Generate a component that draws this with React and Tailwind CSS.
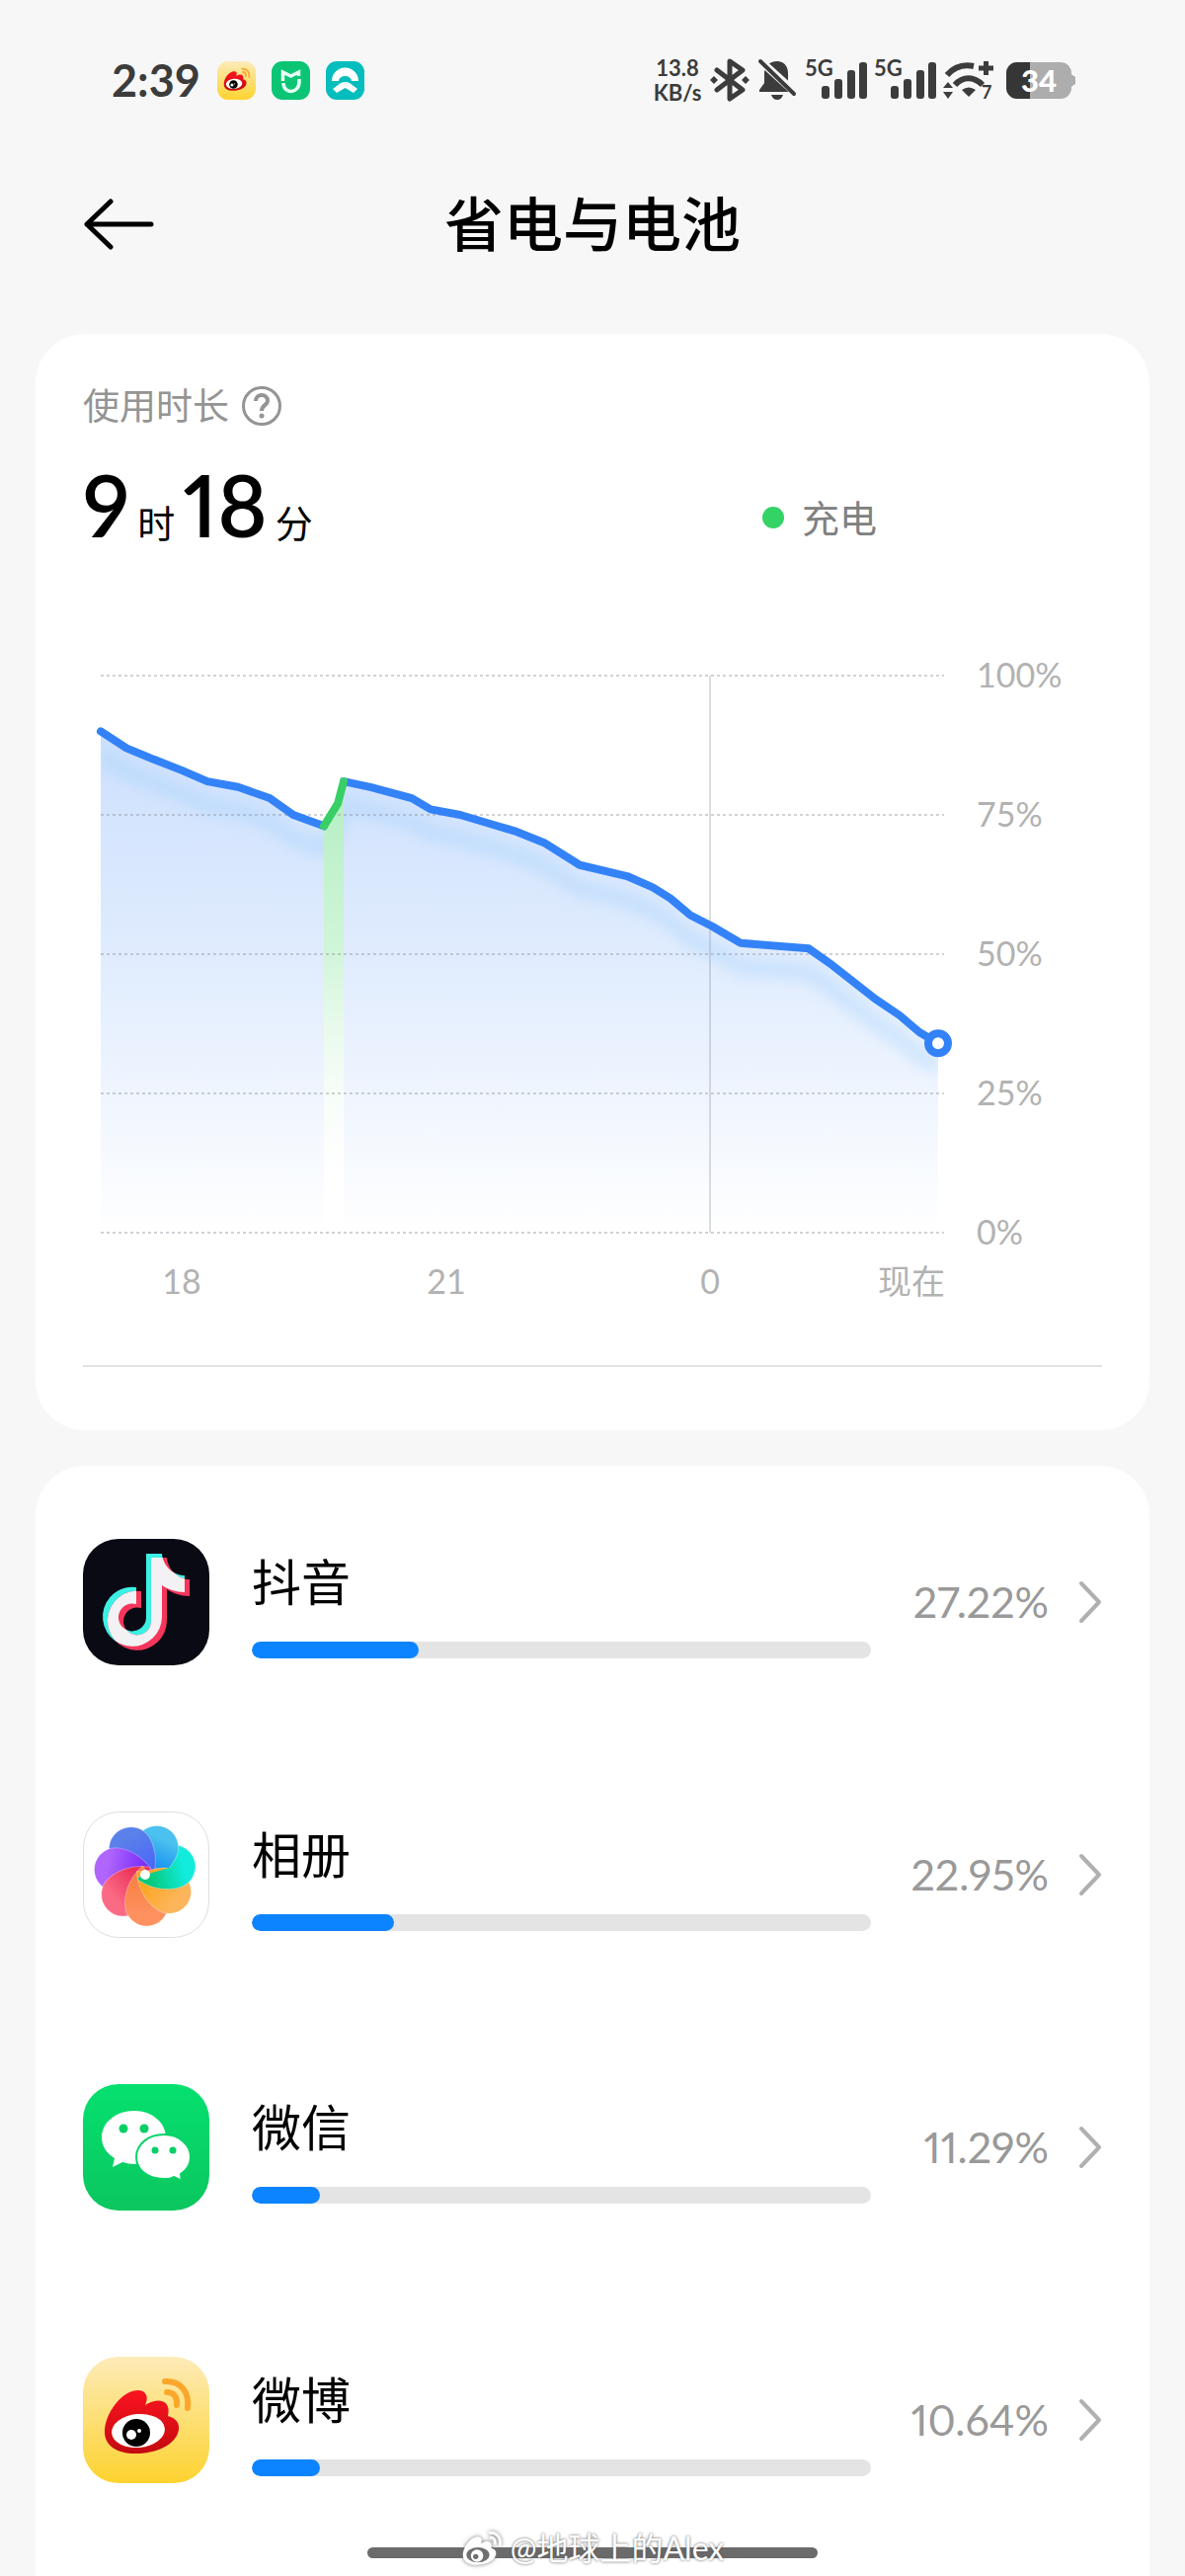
const levelBefore = [
  [18, 90], [44, 87], [71, 85], [100, 83], [126, 81], [157, 80], [189, 78], [213, 75], [244, 73],
];

const levelCharging = [[244, 73], [258, 77], [264, 81]];

const levelAfter = [
  [264, 81], [291, 80], [333, 78], [352, 76], [382, 75], [439, 72], [467, 70], [503, 66],
  [551, 64], [577, 62], [595, 60], [615, 57], [637, 55], [666, 52], [735, 51], [759, 48],
  [802, 42], [827, 39], [847, 36], [866, 34],
];

const gridLevels = [100, 75, 50, 25, 0];

const toY = (level) => 24 + (100 - level) * 5.64;
const toLine = (points) => points.map(([x, level]) => `${x},${toY(level)}`).join(" ");
const toArea = (points) =>
  `${points[0][0]},${toY(0)} ${toLine(points)} ${points[points.length - 1][0]},${toY(0)}`;

function BatteryChart() {
  const all = [...levelBefore, ...levelCharging, ...levelAfter];

  return (
    <svg viewBox="0 0 1032 680" className="w-full block" role="img" aria-label="电量">
      <defs>
        <linearGradient id="blueFill" gradientUnits="userSpaceOnUse" x1="0" y1="80" x2="0" y2="588">
          <stop offset="0" stopColor="#3482f7" stopOpacity="0.25" />
          <stop offset="0.5" stopColor="#3482f7" stopOpacity="0.14" />
          <stop offset="1" stopColor="#3482f7" stopOpacity="0" />
        </linearGradient>
        <linearGradient id="greenFill" gradientUnits="userSpaceOnUse" x1="0" y1="131" x2="0" y2="560">
          <stop offset="0" stopColor="#b4eec3" />
          <stop offset="0.4" stopColor="#d0f5d8" />
          <stop offset="1" stopColor="#ffffff" stopOpacity="0" />
        </linearGradient>
        <filter id="glow" x="-10%" y="-20%" width="120%" height="150%">
          <feGaussianBlur stdDeviation="7" />
        </filter>
        <clipPath id="areaClip">
          <polygon points={toArea(all)} />
        </clipPath>
      </defs>

      <polygon points={toArea(levelBefore)} fill="url(#blueFill)" />
      <polygon points={toArea(levelAfter)} fill="url(#blueFill)" />
      <g clipPath="url(#areaClip)">
        <polyline
          points={toLine(all)}
          transform="translate(0 24)"
          fill="none"
          stroke="#9ccdf8"
          strokeOpacity="0.35"
          strokeWidth="16"
          filter="url(#glow)"
        />
      </g>
      <polygon points={toArea(levelCharging)} fill="url(#greenFill)" />

      {gridLevels.map((level) => (
        <g key={level}>
          <line
            x1="18"
            x2="872"
            y1={toY(level)}
            y2={toY(level)}
            stroke="#8a8f99"
            strokeOpacity="0.4"
            strokeWidth="2"
            strokeDasharray="3 3"
          />
          <text x="905" y={toY(level) + 12} className="fill-[#b2b2b2] text-[34px]">
            {level}%
          </text>
        </g>
      ))}
      <line x1="635" x2="635" y1="24" y2="588" stroke="#8a8f99" strokeOpacity="0.3" strokeWidth="2" />

      <g fill="none" strokeWidth="8" strokeLinejoin="round" strokeLinecap="round">
        <polyline points={toLine(levelBefore)} stroke="#3482f7" />
        <polyline points={toLine(levelAfter)} stroke="#3482f7" />
        <polyline points={toLine(levelCharging)} stroke="#38cf67" />
      </g>
      <circle cx="866" cy={toY(34)} r="10" fill="#fff" stroke="#3482f7" strokeWidth="8" />

      <g textAnchor="middle" className="fill-[#b2b2b2] text-[34px]">
        <text x="100" y="650">18</text>
        <text x="368" y="650">21</text>
        <text x="635" y="650">0</text>
        <text x="839" y="650">现在</text>
      </g>
    </svg>
  );
}

function WeiboIcon({ className, id }) {
  return (
    <svg viewBox="0 0 128 128" className={className} aria-hidden="true">
      <defs>
        <linearGradient id={`${id}Bg`} x1="0" y1="0" x2="0" y2="1">
          <stop offset="0" stopColor="#fdebb9" />
          <stop offset="1" stopColor="#fdd32f" />
        </linearGradient>
        <linearGradient id={`${id}Red`} x1="0" y1="0" x2="0" y2="1">
          <stop offset="0" stopColor="#fb1420" />
          <stop offset="1" stopColor="#c40a10" />
        </linearGradient>
      </defs>
      <rect width="128" height="128" rx="36" fill={`url(#${id}Bg)`} />
      <path
        d="M22 76C22 58 39 34 56 34C64 34 67 41 63 49C75 41 90 43 86 60C94 62 98 67 97 74C94 90 73 98 53 98C34 98 22 90 22 76Z"
        fill={`url(#${id}Red)`}
      />
      <ellipse cx="56" cy="75" rx="27" ry="17" fill="#fff" transform="rotate(-5 56 75)" />
      <circle cx="54" cy="77" r="14" fill="#000" />
      <circle cx="49" cy="79" r="5" fill="#fff" />
      <circle cx="57" cy="75" r="2" fill="#fff" />
      <g fill="none" stroke="#fba72c" strokeWidth="6" strokeLinecap="round">
        <path d="M85 36C92 36 96 41 95 49" />
        <path d="M83 25C99 24 108 36 106 52" />
      </g>
    </svg>
  );
}

function MiHomeIcon() {
  return (
    <svg viewBox="0 0 39 39" className="w-[39px]" aria-hidden="true">
      <rect width="39" height="39" rx="11" fill="#0bc575" />
      <g fill="none" stroke="#e6fff4" strokeWidth="3.5">
        <path d="M11.5 20V11L19.500 15L27.500 11V15" />
        <path d="M12 22C12 34 28 33 28 21V18" />
      </g>
    </svg>
  );
}

function NioIcon() {
  return (
    <svg viewBox="0 0 39 39" className="w-[39px]" aria-hidden="true">
      <rect width="39" height="39" rx="11" fill="#06bdbd" />
      <path d="M6 20A13.500 13.500 0 0 1 33 20H26A6.500 5 0 0 0 13 20Z" fill="#fff" />
      <path d="M7 28L15 22Q19.500 20 24 22L32 28L28 32L19.500 27L11 32Z" fill="#fff" />
    </svg>
  );
}

function DouyinIcon() {
  const note =
    "M64 15H80C81 27 91 37 103 37V54C94 54 86 51 80 47V79A30 30 0 1 1 54 49V66A14 14 0 1 0 64 79Z";
  return (
    <svg viewBox="0 0 128 128" className="w-32" aria-hidden="true">
      <clipPath id="noteClip">
        <path d={note} />
      </clipPath>
      <rect width="128" height="128" rx="36" fill="#0a0a14" />
      <path d={note} fill="#3df0e4" />
      <path d={note} fill="#f5355c" transform="translate(5 4)" />
      <g clipPath="url(#noteClip)">
        <path d={note} fill="#f3f1f3" transform="translate(5 4)" />
      </g>
    </svg>
  );
}

const petals = [
  { angle: 74, from: "#12ecdc", to: "#06c97c" },
  { angle: 23, from: "#4cc0ee", to: "#0a86f2" },
  { angle: 331, from: "#5a80ea", to: "#4a66f8" },
  { angle: 280, from: "#b065fb", to: "#7a30fb" },
  { angle: 228, from: "#fb6a85", to: "#ea2f55" },
  { angle: 177, from: "#fd9160", to: "#f98044" },
  { angle: 125, from: "#fcb55a", to: "#fca51f" },
];

const petalPath = "M-3 1C-14 -6 -23 -17 -22 -30A22 22 0 0 1 22 -30C22 -15 14 0 2 9Z";

function GalleryIcon() {
  return (
    <svg viewBox="0 0 128 128" className="w-32" aria-hidden="true">
      <defs>
        {petals.map((petal) => (
          <linearGradient key={petal.angle} id={`petal${petal.angle}`} x1="0" y1="0" x2="0" y2="1">
            <stop offset="0.2" stopColor={petal.from} />
            <stop offset="0.8" stopColor={petal.to} />
          </linearGradient>
        ))}
        <clipPath id="petalHalf">
          <rect x="0" y="-60" width="40" height="80" />
        </clipPath>
      </defs>
      <rect x="0.500" y="0.500" width="127" height="127" rx="36" fill="#fff" stroke="#dedede" />
      <g transform="translate(63 64)" stroke="#fff" strokeOpacity="0.3">
        {petals.map((petal) => (
          <path
            key={petal.angle}
            d={petalPath}
            transform={`rotate(${petal.angle})`}
            fill={`url(#petal${petal.angle})`}
          />
        ))}
        <g transform="rotate(74)" clipPath="url(#petalHalf)">
          <path d={petalPath} fill="url(#petal74)" />
        </g>
        <circle r="5" fill="#fff" stroke="none" />
      </g>
    </svg>
  );
}

function WechatIcon() {
  return (
    <svg viewBox="0 0 128 128" className="w-32" aria-hidden="true">
      <defs>
        <linearGradient id="wechatBg" x1="0" y1="0" x2="0" y2="1">
          <stop offset="0" stopColor="#05e06f" />
          <stop offset="1" stopColor="#0bc65e" />
        </linearGradient>
      </defs>
      <rect width="128" height="128" rx="36" fill="url(#wechatBg)" />
      <path
        d="M52 27C33 27 19 39 19 54C19 63 24 70 32 75L30 84L40 79C44 80 48 81 52 81C70 81 84 69 84 54C84 39 70 27 52 27Z"
        fill="#fff"
      />
      <path
        d="M82 51C97 51 109 61 109 74C109 81 105 87 99 91L100 98L92 94C89 96 85 96 82 96C66 96 54 87 54 74C54 61 66 51 82 51Z"
        fill="#fff"
        stroke="#08d367"
        strokeWidth="2"
      />
      <g fill="#08cf65">
        <circle cx="41" cy="45" r="4.500" />
        <circle cx="62" cy="45" r="4.500" />
        <circle cx="73" cy="67" r="3.500" />
        <circle cx="91" cy="67" r="3.500" />
      </g>
    </svg>
  );
}

function Signal() {
  return (
    <div className="flex h-11 w-[62px]">
      <span className="text-[22px] leading-[20px] font-bold">5G</span>
      <svg viewBox="0 0 46 44" className="-ml-3 w-[46px] shrink-0" fill="#3c3c3c" aria-hidden="true">
        <rect x="0" y="28" width="8" height="13" rx="3" />
        <rect x="13" y="21" width="8" height="20" rx="3" />
        <rect x="26" y="12" width="8" height="29" rx="3" />
        <rect x="38" y="4" width="8" height="37" rx="3" />
      </svg>
    </div>
  );
}

function StatusBar() {
  return (
    <div className="flex h-16 items-center justify-between pr-[111px] pl-[113px] text-[#3c3c3c]">
      <div className="flex items-center gap-4">
        <span className="w-[91px] text-[45px] leading-[64px] font-bold">2:39</span>
        <WeiboIcon className="w-[39px]" id="weiboSmall" />
        <MiHomeIcon />
        <NioIcon />
      </div>

      <div className="flex items-center gap-2">
        <div className="w-[50px] text-center text-[22px] leading-[25px] font-bold">
          13.8
          <br />
          KB/s
        </div>

        {/* bluetooth */}
        <svg viewBox="0 0 40 44" className="w-10" aria-hidden="true">
          <path
            d="M7 12L33 32L20 41V3L33 12L7 32"
            fill="none"
            stroke="#3c3c3c"
            strokeWidth="5"
            strokeLinecap="round"
            strokeLinejoin="round"
          />
          <path d="M0 22L4 18L8 22L4 26ZM32 22L36 18L40 22L36 26Z" fill="#3c3c3c" />
        </svg>

        {/* muted bell */}
        <svg viewBox="0 0 40 44" className="w-10" aria-hidden="true">
          <path
            d="M20 3C27 3 31 8 31 15V24L36 34H2V32L7 25V14C8 7 13 3 20 3ZM14 37H26C25 40 23 42 20 42C17 42 15 40 14 37Z"
            fill="#3c3c3c"
          />
          <path d="M-1 -1L43 39" stroke="#f7f7f7" strokeWidth="8" />
          <path d="M3 3L37 36" stroke="#3c3c3c" strokeWidth="4" strokeLinecap="round" />
        </svg>

        <Signal />
        <Signal />

        {/* wifi */}
        <svg viewBox="0 0 52 44" className="w-[52px]" fill="none" stroke="#3c3c3c" aria-hidden="true">
          <path d="M4 17C11 9 21 6 31 8" strokeWidth="6" />
          <path d="M12 27C20 18 31 18 40 27" strokeWidth="6" />
          <path d="M19 32Q26 27 33 32L26 39Z" fill="#3c3c3c" stroke="none" />
          <path d="M36 10H51M43.500 3V17" strokeWidth="5" />
          <path d="M0 30L5 24L10 30ZM0 34H10L5 41Z" fill="#3c3c3c" stroke="none" />
          <text x="39" y="41" className="fill-[#3c3c3c] stroke-none text-[18px] font-bold">7</text>
        </svg>

        {/* battery */}
        <svg viewBox="0 0 70 44" className="ml-1 w-[70px]" aria-hidden="true">
          <clipPath id="batteryClip">
            <rect x="0" y="4" width="66" height="37" rx="11" />
          </clipPath>
          <path d="M64 15L70 19V26L64 30Z" fill="#adadad" />
          <g clipPath="url(#batteryClip)">
            <rect y="4" width="66" height="37" fill="#adadad" />
            <rect y="4" width="24" height="37" fill="#363636" />
          </g>
          <text x="33" y="34" textAnchor="middle" className="fill-white text-[31px] font-black">
            34
          </text>
        </svg>
      </div>
    </div>
  );
}

const apps = [
  { name: "抖音", percent: 27.22, icon: <DouyinIcon /> },
  { name: "相册", percent: 22.95, icon: <GalleryIcon /> },
  { name: "微信", percent: 11.29, icon: <WechatIcon /> },
  { name: "微博", percent: 10.64, icon: <WeiboIcon className="w-32" id="weibo" /> },
];

function AppRow({ app }) {
  return (
    <a href="#" className="flex h-[276px] items-center">
      {app.icon}
      <div className="ml-[43px] flex-1">
        <div className="text-[50px] leading-[72px]">{app.name}</div>
        <div
          role="progressbar"
          aria-label={app.name}
          aria-valuenow={app.percent}
          className="mt-6 h-[17px] overflow-hidden rounded-full bg-[#e4e4e4]"
        >
          <div
            className="h-full rounded-full bg-[#0d84ff]"
            style={{ width: `${Math.round(app.percent)}%` }}
          />
        </div>
      </div>
      <div className="w-[180px] text-right text-[43px] leading-[56px] text-[#999999] proportional-nums">
        {app.percent.toFixed(2)}%
      </div>
      <svg viewBox="0 0 24 44" className="ml-[30px] w-6" aria-hidden="true">
        <path
          d="M3 3L21 22L3 41"
          fill="none"
          stroke="#b0b0b0"
          strokeWidth="4"
          strokeLinecap="round"
          strokeLinejoin="round"
        />
      </svg>
    </a>
  );
}

export default function App() {
  return (
    <div className="relative flex min-h-screen flex-col bg-[#f7f7f7] pt-[49px] font-[Lato,'Noto_Sans_CJK_SC',sans-serif] text-black">
      <StatusBar />

      <header className="flex items-center justify-between px-[84px] pt-[78px] pb-[75px]">
        <button type="button" aria-label="返回" className="w-[72px]">
          <svg viewBox="0 0 72 52" className="w-full" aria-hidden="true">
            <path
              d="M28 3L4 26L28 49M4 26H69"
              fill="none"
              stroke="#000"
              strokeWidth="5"
              strokeLinecap="round"
              strokeLinejoin="round"
            />
          </svg>
        </button>
        <h1 className="text-[60px] leading-[72px] font-medium">省电与电池</h1>
        <div className="w-[72px]" />
      </header>

      <section className="mx-9 rounded-[50px] bg-white px-12 pt-[49px] pb-16">
        <div className="flex items-center gap-3 text-[37px] leading-[48px] text-[#949494]">
          使用时长
          <button type="button" aria-label="说明" className="w-[42px]">
            <svg viewBox="0 0 42 42" className="w-full" fill="none" stroke="#949494" aria-hidden="true">
              <circle cx="21" cy="21" r="18.500" strokeWidth="3" />
              <path d="M15 16C15 8 27 8 27 16C27 20 21 20 21 26" strokeWidth="4" />
              <circle cx="21" cy="31" r="2.500" fill="#949494" stroke="none" />
            </svg>
          </button>
        </div>

        <div className="mt-8 grid grid-cols-3 items-center">
          <div className="col-span-2 flex items-baseline gap-2 text-[38px] leading-[88px] proportional-nums">
            <span className="text-[86px] font-semibold">9</span>
            时
            <span className="text-[86px] font-semibold">18</span>
            分
          </div>
          <div className="flex items-center gap-[18px] pt-2 text-[38px] leading-[48px] text-[#808080]">
            <span className="size-[22px] rounded-full bg-[#34d366]" />
            充电
          </div>
        </div>

        <div className="mt-[87px]">
          <BatteryChart />
        </div>
        <hr className="mt-[42px] border-t-2 border-[#e2e2e2]" />
      </section>

      <section className="mx-9 mt-9 grow rounded-t-[50px] bg-white px-12">
        {apps.map((app) => (
          <AppRow key={app.name} app={app} />
        ))}
      </section>

      {/* gesture bar with the author tag over it */}
      <div className="absolute inset-x-0 bottom-0 flex h-12 items-center justify-center">
        <div className="h-[11px] w-[456px] rounded-full bg-[#6b6b6b]" />
        <div className="absolute flex items-center gap-2 pb-2 text-[32px] leading-[40px] text-white [text-shadow:0_0_3px_#555]">
          <svg viewBox="18 20 94 82" className="w-[42px] drop-shadow-[0_0_2px_#777]" aria-hidden="true">
            <path
              d="M22 76C22 58 39 34 56 34C64 34 67 41 63 49C75 41 90 43 86 60C94 62 98 67 97 74C94 90 73 98 53 98C34 98 22 90 22 76Z"
              fill="#fff"
            />
            <ellipse cx="56" cy="75" rx="26" ry="17" fill="#707070" />
            <circle cx="54" cy="77" r="14" fill="#fff" />
            <circle cx="51" cy="79" r="6" fill="#707070" />
            <g fill="none" stroke="#fff" strokeWidth="6" strokeLinecap="round">
              <path d="M85 36C92 36 96 41 95 49" />
              <path d="M83 25C99 24 108 36 106 52" />
            </g>
          </svg>
          @地球上的Alex
        </div>
      </div>
    </div>
  );
}
